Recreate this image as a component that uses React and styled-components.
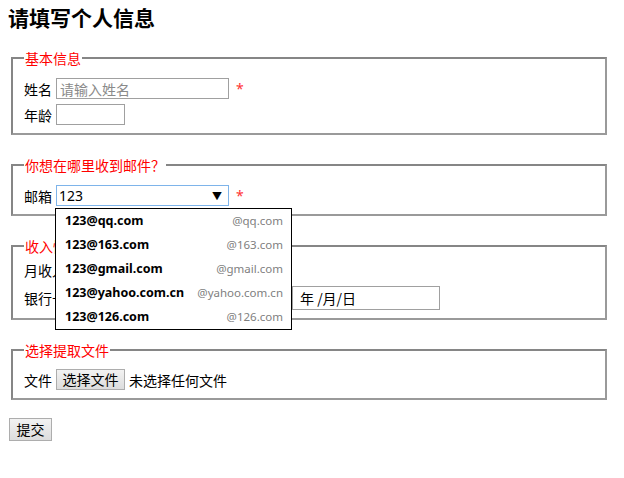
import React from 'react';
import styled, { createGlobalStyle } from 'styled-components';

const suggestions = [
  { full: '123@qq.com', domain: '@qq.com' },
  { full: '123@163.com', domain: '@163.com' },
  { full: '123@gmail.com', domain: '@gmail.com' },
  { full: '123@yahoo.com.cn', domain: '@yahoo.com.cn' },
  { full: '123@126.com', domain: '@126.com' },
]

export default function App() {
  return (
    <>
      <GlobalStyle />
      <Title>请填写个人信息</Title>
      <form>
        <Group>
          <Legend>基本信息</Legend>
          <Rows>
            <Row>
              <Label>姓名</Label>
              <TextInput $width={173} placeholder="请输入姓名" />
              <Required>*</Required>
            </Row>
            <Row>
              <Label>年龄</Label>
              <TextInput $width={69} />
            </Row>
          </Rows>
        </Group>

        <Group>
          <Legend>你想在哪里收到邮件？</Legend>
          <Rows>
            <Row>
              <Label>邮箱</Label>
              <ComboWrap>
                <ComboBox>
                  <ComboInput defaultValue="123" />
                  <Arrow>▼</Arrow>
                </ComboBox>
                <Suggestions>
                  {suggestions.map((item) => (
                    <Suggestion key={item.full}>
                      <FullAddress>{item.full}</FullAddress>
                      <Domain>{item.domain}</Domain>
                    </Suggestion>
                  ))}
                </Suggestions>
              </ComboWrap>
              <Required>*</Required>
            </Row>
          </Rows>
        </Group>

        <Group $top={3}>
          <Legend>收入情况</Legend>
          <Rows $gap={6}>
            <Row>
              <Label>月收入</Label>
              <TextInput $width={120} />
            </Row>
            <Row>
              <Label>银行卡号</Label>
              <TextInput $width={158} />
              <Label>有效期</Label>
              <DateBox>年 /月/日</DateBox>
            </Row>
          </Rows>
        </Group>

        <Group $top={9}>
          <Legend>选择提取文件</Legend>
          <Rows>
            <Row>
              <Label>文件</Label>
              <FileButton type="button">选择文件</FileButton>
              <FileName>未选择任何文件</FileName>
            </Row>
          </Rows>
        </Group>

        <SubmitButton type="button">提交</SubmitButton>
      </form>
    </>
  )
}

// Styled components
const GlobalStyle = createGlobalStyle`
  body {
    margin: 5px 8px 8px;
    background: #fff;
    color: #000;
    font-family: 'Noto Sans', 'Noto Sans CJK SC', sans-serif;
    font-size: 14px;
    line-height: 20px;
  }
`

const Title = styled.h2`
  margin: 0 0 18px;
  font-size: 21px;
  line-height: 25px;
  font-weight: 700;
  font-family: 'Noto Sans CJK SC', sans-serif;
`

const Group = styled.fieldset`
  margin: 0 9px 20px 3px;
  padding: ${(p) => (p.$top ?? 10)}px 11px 8px;
  border: 2px solid #868686;
  border-right-color: #9a9a9a;
  border-bottom-color: #9a9a9a;
`

const Legend = styled.legend`
  padding: 0 1px;
  color: #ff0000;
  font-family: 'Noto Sans CJK SC', sans-serif;
  font-size: 14px;
  line-height: 20px;
`

const Rows = styled.div`
  display: flex;
  flex-direction: column;
  gap: ${(p) => p.$gap || 5}px;
`

const Row = styled.div`
  display: flex;
  align-items: center;
  gap: 4px;
`

const Label = styled.span`
  font-family: 'Noto Sans CJK SC', sans-serif;
  font-size: 14px;
`

const TextInput = styled.input`
  box-sizing: border-box;
  width: ${(p) => p.$width}px;
  height: 21px;
  margin: 0;
  padding: 0 3px;
  border: 1px solid #a0a0a0;
  font-family: 'Noto Sans CJK SC', sans-serif;
  font-size: 14px;
  outline: none;
  &::placeholder {
    color: #8a8a8a;
  }
`

const Required = styled.span`
  margin-left: 3px;
  color: #ff3333;
  font-size: 14px;
`

const ComboWrap = styled.div`
  position: relative;
`

const ComboBox = styled.div`
  box-sizing: border-box;
  display: flex;
  align-items: center;
  width: 173px;
  height: 21px;
  border: 1px solid #7eb4ea;
`

const ComboInput = styled.input`
  flex: 1;
  min-width: 0;
  height: 100%;
  margin: 0;
  padding: 0 2px;
  border: none;
  outline: none;
  font-family: 'Noto Sans', sans-serif;
  font-size: 14px;
`

const Arrow = styled.span`
  width: 14px;
  margin-right: 2px;
  font-size: 10px;
  line-height: 1;
  color: #000;
`

const Suggestions = styled.ul`
  position: absolute;
  top: calc(100% + 2px);
  left: -1px;
  z-index: 10;
  box-sizing: border-box;
  width: 237px;
  margin: 0;
  padding: 0;
  list-style: none;
  background: #fff;
  border: 1px solid #000;
`

const Suggestion = styled.li`
  display: flex;
  align-items: center;
  justify-content: space-between;
  height: 24px;
  padding: 0 8px 0 9px;
`

const FullAddress = styled.span`
  font-family: 'Noto Sans', sans-serif;
  font-size: 12.5px;
  font-weight: 700;
  color: #000;
`

const Domain = styled.span`
  font-family: 'Noto Sans', sans-serif;
  font-size: 11.5px;
  color: #808080;
`

const DateBox = styled.div`
  box-sizing: border-box;
  width: 148px;
  height: 24px;
  padding: 0 7px;
  border: 1px solid #a0a0a0;
  font-family: 'Noto Sans CJK SC', sans-serif;
  font-size: 14px;
  line-height: 22px;
`

const FileButton = styled.button`
  box-sizing: border-box;
  width: 69px;
  height: 21px;
  margin: 0;
  padding: 0;
  border: 1px solid #adadad;
  background: linear-gradient(#f2f2f2, #dddddd);
  font-family: 'Noto Sans CJK SC', sans-serif;
  font-size: 14px;
  line-height: 19px;
  color: #000;
`

const FileName = styled.span`
  font-family: 'Noto Sans CJK SC', sans-serif;
  font-size: 14px;
`

const SubmitButton = styled.button`
  box-sizing: border-box;
  width: 43px;
  height: 23px;
  margin: -6px 0 0 1px;
  padding: 0;
  border: 1px solid #adadad;
  background: linear-gradient(#f2f2f2, #dddddd);
  font-family: 'Noto Sans CJK SC', sans-serif;
  font-size: 14px;
  line-height: 21px;
  color: #000;
`
